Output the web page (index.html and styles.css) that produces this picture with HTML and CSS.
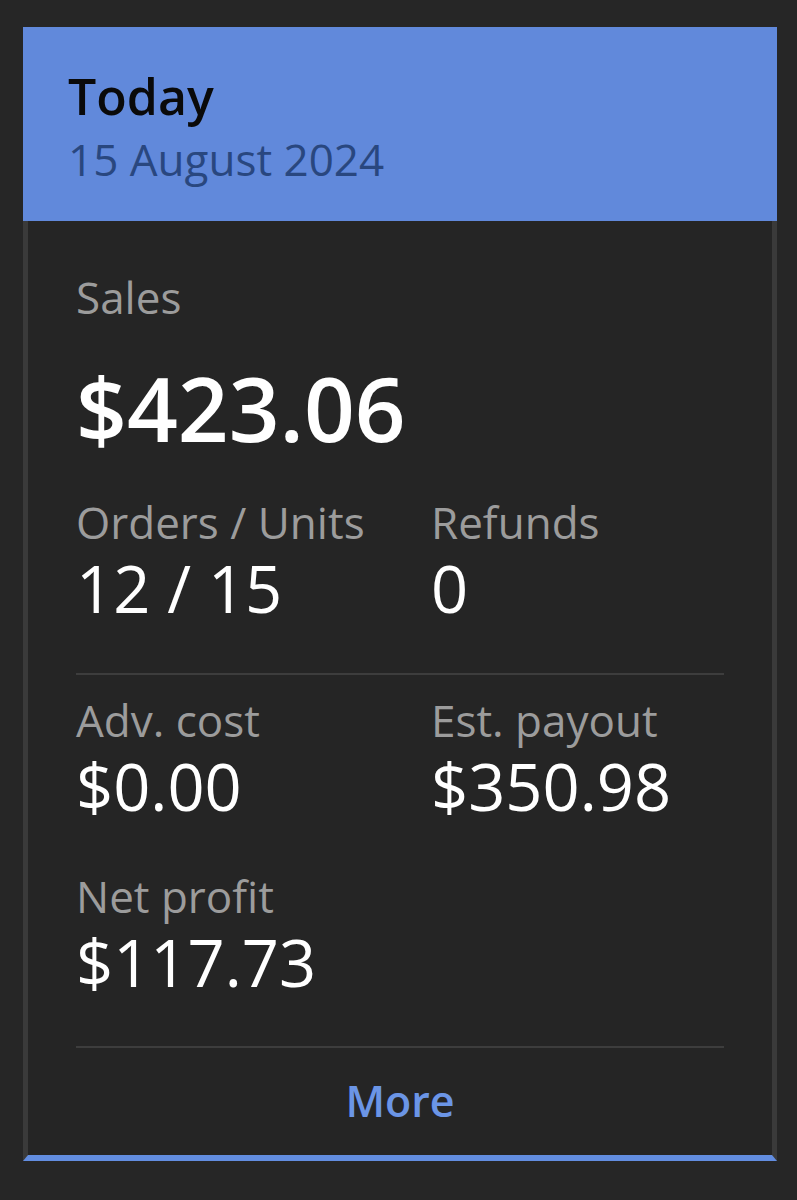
FILE: index.html
```html
<!DOCTYPE html>
<html lang="en">
<head>
<meta charset="utf-8">
<title>Today</title>
<link rel="stylesheet" href="styles.css">
</head>
<body>
<div class="card">
  <header class="card-head">
    <div class="title">Today</div>
    <div class="date">15 August 2024</div>
  </header>
  <section class="card-body">
    <div class="label">Sales</div>
    <div class="big">$423.06</div>
    <div class="grid first">
      <div class="cell">
        <div class="label">Orders / Units</div>
        <div class="value">12 / 15</div>
      </div>
      <div class="cell">
        <div class="label">Refunds</div>
        <div class="value">0</div>
      </div>
    </div>
    <hr class="divider">
    <div class="grid second">
      <div class="cell">
        <div class="label">Adv. cost</div>
        <div class="value">$0.00</div>
      </div>
      <div class="cell">
        <div class="label">Est. payout</div>
        <div class="value">$350.98</div>
      </div>
      <div class="cell">
        <div class="label">Net profit</div>
        <div class="value">$117.73</div>
      </div>
    </div>
    <hr class="divider last">
    <div class="more">More</div>
  </section>
</div>
</body>
</html>
```
FILE: styles.css
```css
html, body {
  margin: 0;
  padding: 0;
  background: #262626;
}
body {
  font-family: "Open Sans", "Noto Sans", sans-serif;
  padding: 27px 20px 0 23px;
}
.card {
  width: 754px;
}
.card-head {
  background: #6189db;
  padding: 39px 45px 29px;
}
.title {
  font-size: 50px;
  line-height: 60px;
  font-weight: 600;
  color: #0a0a0a;
}
.date {
  font-size: 44px;
  line-height: 66px;
  color: #29477f;
}
.card-body {
  background: #252525;
  border-left: 5px solid #3a3a3a;
  border-right: 5px solid #3a3a3a;
  border-bottom: 6px solid #628de0;
  padding: 48px 48px 26px;
}
.label {
  font-size: 44px;
  line-height: 56px;
  color: #9c9c9c;
}
.big {
  font-size: 89px;
  line-height: 100px;
  font-weight: 600;
  color: #ffffff;
  margin-top: 33px;
}
.value {
  font-size: 65px;
  line-height: 76px;
  color: #ffffff;
}
.grid {
  display: grid;
  grid-template-columns: 355px 1fr;
  row-gap: 44px;
}
.grid.first {
  margin-top: 36px;
}
.divider {
  border: 0;
  height: 2px;
  background: #3d3d3d;
  margin: 47px 0 17px;
}
.divider.last {
  margin: 46px 0 25px;
}
.more {
  text-align: center;
  font-size: 43px;
  line-height: 56px;
  font-weight: 600;
  color: #6b95e6;
}
```
